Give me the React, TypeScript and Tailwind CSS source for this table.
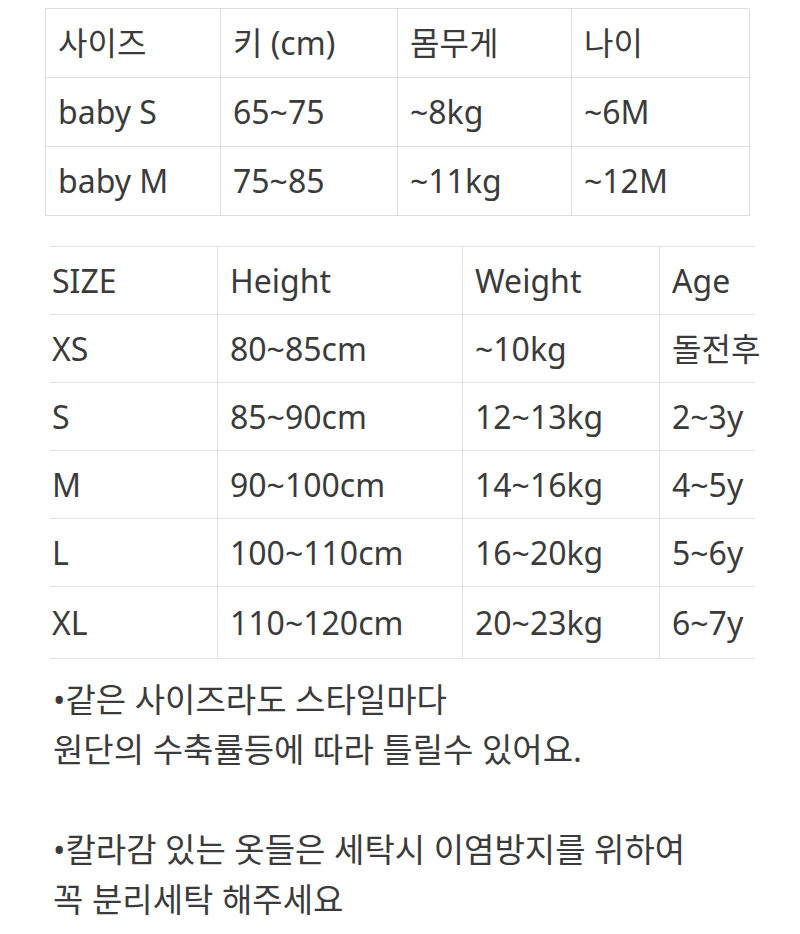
const font = { fontFamily: '"Noto Sans", "Noto Sans CJK KR", sans-serif' };

const babyRows = [
  ["사이즈", "키 (cm)", "몸무게", "나이"],
  ["baby S", "65~75", "~8kg", "~6M"],
  ["baby M", "75~85", "~11kg", "~12M"],
];

const kidRows = [
  ["SIZE", "Height", "Weight", "Age"],
  ["XS", "80~85cm", "~10kg", "돌전후"],
  ["S", "85~90cm", "12~13kg", "2~3y"],
  ["M", "90~100cm", "14~16kg", "4~5y"],
  ["L", "100~110cm", "16~20kg", "5~6y"],
  ["XL", "110~120cm", "20~23kg", "6~7y"],
];

export default function App() {
  return (
    <div className="min-h-[934px] w-[800px] bg-white text-[#3b3b3b]" style={font}>
      {/* baby table */}
      <div className="pt-2 pl-[45px]">
        <div className="grid w-[704px] grid-cols-[175px_177px_174px_178px] border-t border-l border-[#dedede]">
          {babyRows.map((row, r) =>
            row.map((c, i) => (
              <div
                key={`${r}-${i}`}
                className="flex h-[69px] items-center border-r border-b border-[#dedede] pl-3 text-[32px] leading-none whitespace-nowrap"
              >
                {c}
              </div>
            )),
          )}
        </div>
      </div>

      {/* kids table */}
      <div className="mt-[30px] pl-[50px]">
        <div className="w-[705px] border-t border-[#e2e2e2]">
          {kidRows.map((row, r) => (
            <div
              key={r}
              className={`grid grid-cols-[168px_245px_197px_95px] border-b border-[#e2e2e2] ${
                r === kidRows.length - 1 ? "h-[72px]" : "h-[68px]"
              }`}
            >
              {row.map((c, i) => (
                <div
                  key={i}
                  className={`flex items-center text-[32px] leading-none whitespace-nowrap ${
                    i === 0 ? "pl-[2px]" : "pl-3"
                  } ${i < 3 ? "border-r border-[#e2e2e2]" : ""}`}
                >
                  {c}
                </div>
              ))}
            </div>
          ))}
        </div>
      </div>

      {/* notes */}
      <div className="mt-4 pl-[53px] text-[33px] leading-[50px]">
        <p>•같은 사이즈라도 스타일마다</p>
        <p>원단의 수축률등에 따라 틀릴수 있어요.</p>
        <p className="mt-[50px]">•칼라감 있는 옷들은 세탁시 이염방지를 위하여</p>
        <p>꼭 분리세탁 해주세요</p>
      </div>
    </div>
  );
}
